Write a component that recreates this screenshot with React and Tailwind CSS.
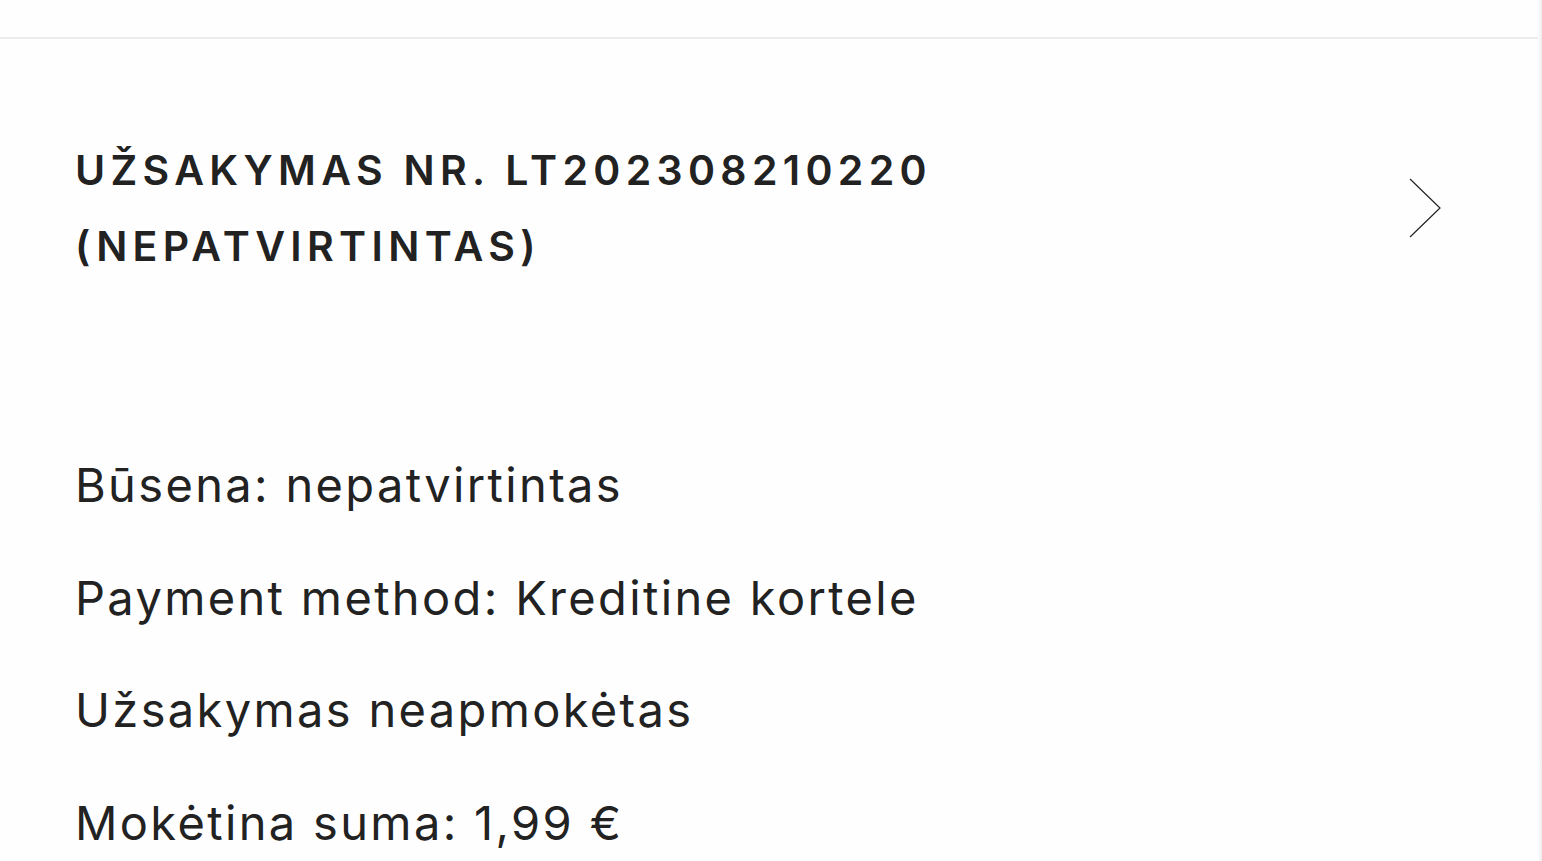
export default function App() {
  return (
    <div className="relative min-h-[861px] w-full overflow-hidden bg-[#fefefe] text-[#222222]" style={{ fontFamily: "Inter, 'Noto Sans', sans-serif" }}>
      <div className="h-[39px] border-b-2 border-[#ebebeb]" />
      <div className="flex items-center justify-between pl-[75px] pr-[101px] pt-[93px]">
        <h2 className="text-[41px] font-semibold uppercase leading-[76px] tracking-[0.13em] text-[#222222]">
          Užsakymas Nr. LT202308210220
          <br />
          (nepatvirtintas)
        </h2>
        <svg width="32" height="60" viewBox="0 0 32 60" fill="none" className="shrink-0">
          <path d="M1 1 L31 30 L1 59" stroke="#222" strokeWidth="1.2" />
        </svg>
      </div>
      <div className="pl-[75px] pt-[145px] text-[47px] leading-[112.6px] tracking-[2.35px]">
        <p>Būsena: nepatvirtintas</p>
        <p>Payment method: Kreditine kortele</p>
        <p>Užsakymas neapmokėtas</p>
        <p>Mokėtina suma: 1,99 €</p>
      </div>
      <div className="absolute right-0 top-0 h-full w-[4px] bg-gradient-to-r from-[#fefefe] to-[#ececec]" />
    </div>
  );
}
